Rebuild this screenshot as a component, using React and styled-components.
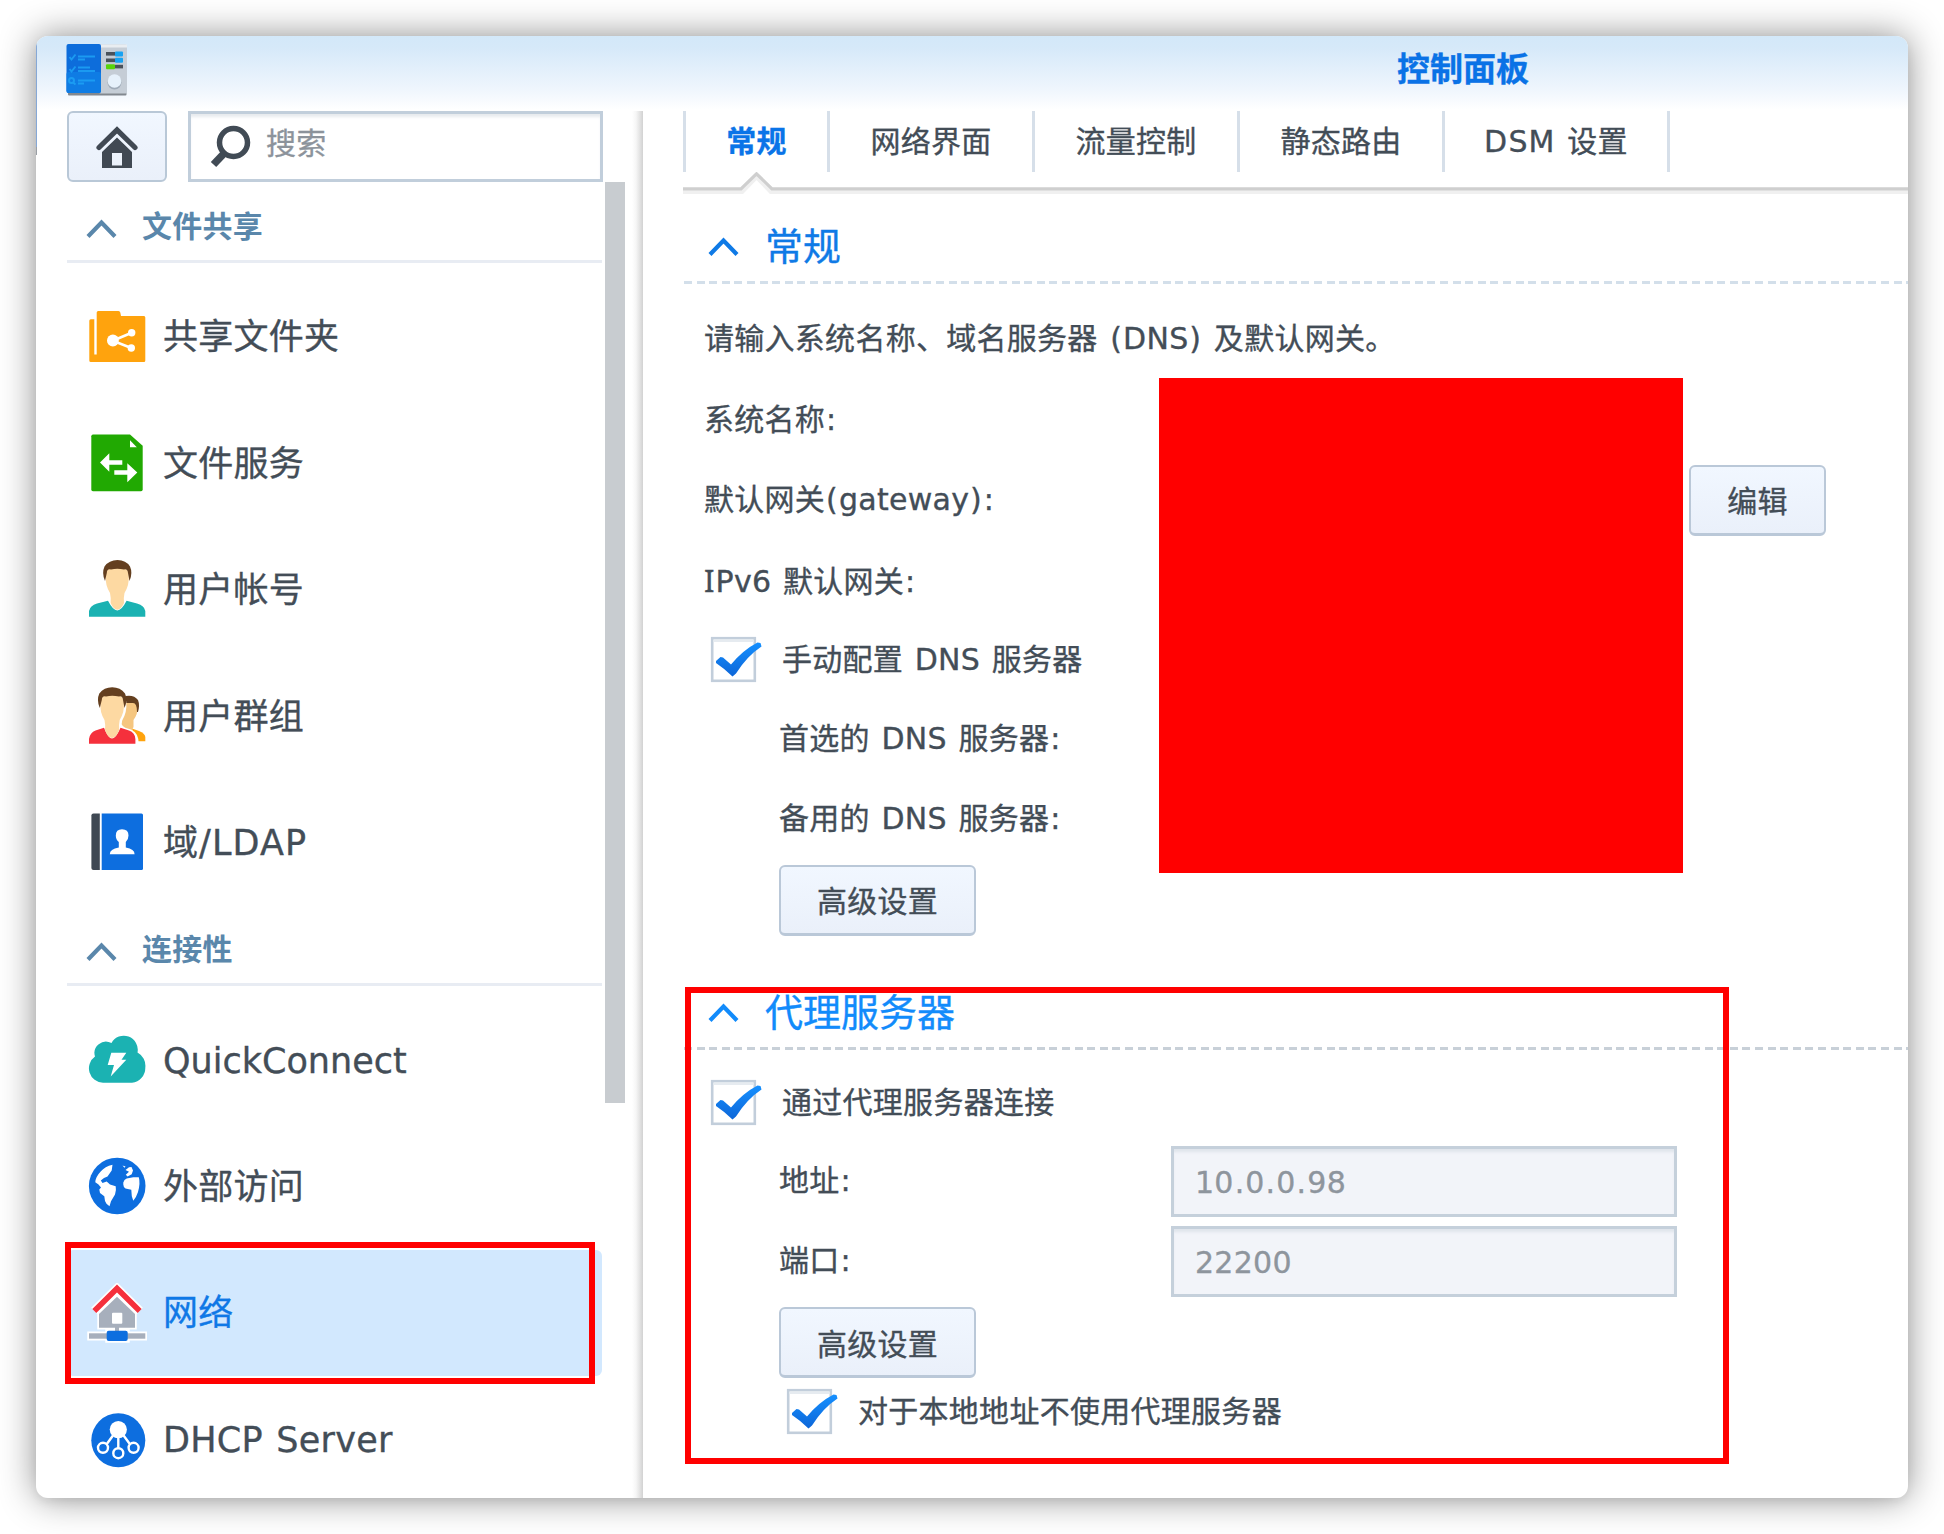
import React from "react";
import styled, { createGlobalStyle } from "styled-components";

const GlobalStyle = createGlobalStyle`
  *, *::before, *::after { box-sizing: border-box; }
  html, body { margin: 0; padding: 0; background: #fff; }
  body {
    width: 1944px;
    height: 1534px;
    overflow: hidden;
    font-family: "DejaVu Sans", "Noto Sans CJK SC", sans-serif;
    font-size: 30px;
    letter-spacing: 0.28px;
    word-spacing: 1.8px;
    color: #434d57;
    -webkit-text-stroke: 0.35px currentColor;
  }
  button, input { font: inherit; color: inherit; letter-spacing: inherit; }
`;

const Desktop = styled.div`
  width: 1944px;
  height: 1534px;
  padding: 36px;
  background: #fff;
`;

const Window = styled.div`
  position: relative;
  display: flex;
  flex-direction: column;
  width: 1872px;
  height: 1462px;
  border-radius: 12px;
  background: #fff;
  box-shadow: 0 0 36px rgba(0, 0, 0, 0.45), 0 4px 10px rgba(0, 0, 0, 0.05);
  overflow: hidden;
`;

const TitleBar = styled.header`
  display: flex;
  flex: none;
  height: 75px;
  padding: 0 379px 0 30px;
  justify-content: space-between;
  background: linear-gradient(#d3e8f9 0, #d6e9f9 12px, #eef5fd 52px, #fff 74px);
`;

const AppIcon = styled.svg`
  width: 62px;
  height: 56px;
  margin-top: 6px;
`;

const Title = styled.h1`
  margin: 0;
  font-size: 33px;
  line-height: 68px;
  font-weight: 700;
  letter-spacing: 0;
  color: #0a72e6;
`;

const Body = styled.div`
  display: flex;
  flex: 1;
  min-height: 0;
`;

const Sidebar = styled.aside`
  display: flex;
  flex-direction: column;
  flex: none;
  width: 607px;
  padding-left: 31px;
  background: linear-gradient(90deg, transparent 596px, #f6f6f6 600px, #e2e2e2 604px, #d2d2d2 607px);
`;

const SearchRow = styled.div`
  display: flex;
  gap: 21px;
  height: 71px;
`;

const HomeButton = styled.button`
  display: flex;
  align-items: center;
  justify-content: center;
  width: 100px;
  height: 71px;
  padding: 0;
  border: 2px solid #b9c8d7;
  border-radius: 6px;
  background: linear-gradient(#f1f7ff, #eaf0fa);
`;

const SearchBox = styled.label`
  display: flex;
  align-items: center;
  width: 415px;
  height: 71px;
  padding-left: 18px;
  border: 3px solid #c1cedb;
  background: #fff;
  box-shadow: inset 0 4px 3px -1px rgba(120, 140, 160, 0.18);
  color: #8c939b;
  gap: 15px;
`;

const Placeholder = styled.span`
  line-height: 44px;
  padding-bottom: 5px;
`;

const SideScroll = styled.div`
  display: flex;
  flex: 1;
  min-height: 0;
`;

const SideList = styled.nav`
  width: 535px;
`;

const Scrollbar = styled.div`
  width: 20px;
  height: 921px;
  margin-left: 3px;
  background: #c8ccd0;
`;

const GroupHeader = styled.div`
  display: flex;
  align-items: center;
  gap: 25px;
  height: 81px;
  margin-bottom: 10.4px;
  padding: 15px 0 0 19px;
  border-bottom: 3px solid #e8ecf3;
  font-size: 30px;
  font-weight: 700;
  line-height: 44px;
  color: #5a87ab;
  -webkit-text-stroke: 0;
`;

const GroupTitle = styled.span`
  padding-bottom: 3px;
`;

const NavItem = styled.a`
  display: flex;
  align-items: center;
  gap: 16px;
  height: 126.4px;
  padding-left: 20px;
  border-radius: 6px;
  font-size: 35px;
  line-height: 50px;
  letter-spacing: ${(p) => p.$spacing}px;
  color: ${(p) => (p.$active ? "#0f78e6" : "#434d57")};
  background: ${(p) => (p.$active ? "#d2e8fe" : "transparent")};
`;

const NavIcon = styled.svg`
  flex: none;
  width: 60px;
  height: 60px;
`;

const NavText = styled.span`
  padding-top: 1.5px;
`;

const Main = styled.main`
  display: flex;
  flex-direction: column;
  flex: 1;
  padding-left: 40px;
`;

const Tabs = styled.div`
  display: flex;
  height: 61px;
  border-left: 3px solid #d6dfe9;
`;

const Tab = styled.div`
  width: ${(p) => p.$w}px;
  border-right: 3px solid #d6dfe9;
  line-height: 62px;
  text-align: center;
  font-weight: ${(p) => (p.$active ? 700 : 400)};
  color: ${(p) => (p.$active ? "#0a74e8" : "#434d57")};
`;

const Caps = styled.span`
  letter-spacing: 1.2px;
`;

const TabLine = styled.svg`
  display: block;
  width: 1225px;
  height: 26px;
`;

const SectionHeader = styled.div`
  display: flex;
  align-items: center;
  height: ${(p) => p.$h}px;
  padding: ${(p) => p.$top}px 0 0 25px;
  gap: 26px;
  font-size: 38px;
  line-height: 56px;
  letter-spacing: 0;
  color: ${(p) => p.$color};
`;

const DashLine = styled.div`
  height: 3px;
  margin-left: 1px;
  background: repeating-linear-gradient(90deg, ${(p) => p.$color} 0 8px, transparent 8px 12.6px);
`;

const Row = styled.div`
  display: flex;
  align-items: center;
  height: ${(p) => p.$h}px;
  padding-left: ${(p) => p.$indent}px;
  line-height: 44px;
  white-space: pre;
`;

const Label = styled.span`
  width: ${(p) => (p.$w ? p.$w + "px" : "auto")};
`;

const SerifCap = styled.span`
  font-family: "Noto Sans", sans-serif;
  font-size: 31px;
  letter-spacing: 1px;
`;

const Mark = styled.span`
  padding: 0 0.9px;
`;

const CheckSvg = styled.svg`
  flex: none;
  width: 54px;
  height: 48px;
  margin-right: 18px;
`;

const Button = styled.button`
  width: ${(p) => p.$w}px;
  height: 71px;
  padding: 5px 0 0;
  border: 2px solid #bac8d8;
  border-bottom-width: 3px;
  border-radius: 6px;
  background: linear-gradient(#f1f7ff, #eaf0fa);
  text-align: center;
`;

const Field = styled.div`
  width: 506px;
  height: 71px;
  padding-left: 21px;
  border: 3px solid #c5d0db;
  background: #f2f4f9;
  box-shadow: inset 0 4px 3px -1px rgba(120, 140, 160, 0.15);
  color: #8e959d;
  line-height: 68px;
`;

const Redaction = styled.div`
  position: absolute;
  left: 1123px;
  top: 342px;
  width: 524px;
  height: 495px;
  background: #ff0000;
`;

const Highlight = styled.div`
  position: absolute;
  left: ${(p) => p.$x}px;
  top: ${(p) => p.$y}px;
  width: ${(p) => p.$w}px;
  height: ${(p) => p.$h}px;
  border: 6px solid #ff0000;
`;

const EdgeSliver = styled.div`
  position: absolute;
  left: 0;
  top: 7px;
  width: 1px;
  height: 112px;
  background: linear-gradient(#86a8d6 0 93%, #9a9fa5 93%);
`;

/* Gives punctuation a little more room than the font's own advance. */
const Text = ({ children }) =>
  children.split(/([():.])/).map((part, i) => (i % 2 ? <Mark key={i}>{part}</Mark> : part));

const Chevron = ({ color }) => (
  <svg width="31" height="20" viewBox="0 0 31 20" fill="none">
    <path d="M2 17.5 15.5 3.5 29 17.5" stroke={color} strokeWidth="4.2" />
  </svg>
);

const Check = ({ id }) => (
  <CheckSvg viewBox="0 0 54 48">
    <defs>
      <linearGradient id={id} x1="0" y1="0" x2="0" y2="1">
        <stop offset="0" stopColor="#1590ff" />
        <stop offset="1" stopColor="#0d66d8" />
      </linearGradient>
    </defs>
    <rect x="2.2" y="2.2" width="42.6" height="42.6" fill="#fff" stroke="#c2cedb" strokeWidth="2.6" />
    <rect x="3.5" y="3.5" width="40" height="2.5" fill="#e6ebf0" />
    <path d="M6 25 10.500 21 13 21.500 21 28.500Q33 14 47.500 6.500L50.500 7 51.500 10.500Q37 20 26 37.500L22.500 40.500Q15 33 6 27Z" fill={`url(#${id})`} />
  </CheckSvg>
);

const PanelIcon = () => (
  <AppIcon viewBox="0 0 62 56">
    <rect x="2" y="50" width="58.500" height="3.500" rx="1" fill="#82888f" />
    <rect x="33" y="2.500" width="28" height="49" rx="1.500" fill="#c5cdd6" />
    <rect x="33" y="2.500" width="28" height="3" fill="#e9edf1" />
    <rect x="0.500" y="2" width="34.500" height="49" rx="2" fill="#0d6ddb" />
    <rect x="0.500" y="30" width="34.500" height="21" rx="2" fill="#0f7ce4" />
    <g stroke="#1ea2f5" strokeWidth="2" fill="none" opacity="0.85">
      <path d="M3.500 15l2 2.500 4-5M12 14.500h17M12 17.500h7" />
      <path d="M3.500 27l2 2.500 4-5M12 25.500h12M12 29h17" />
      <circle cx="5.500" cy="38.500" r="2.500" />
      <path d="M7 40.500l2.500 2M12 38.500h17M12 41.500h6" />
    </g>
    <rect x="40" y="10" width="9" height="3.600" fill="#4a525b" />
    <rect x="49" y="9.500" width="8" height="5" rx="1" fill="#17a2f2" />
    <rect x="40" y="16.500" width="9" height="3.600" fill="#4a525b" />
    <rect x="49" y="15.800" width="8" height="5" rx="1" fill="#17a2f2" />
    <rect x="49" y="22.800" width="8" height="3.600" fill="#4a525b" />
    <rect x="40" y="22.200" width="9" height="5" rx="1" fill="#58d40b" />
    <circle cx="48.500" cy="40.500" r="7" fill="#9fabb8" />
    <circle cx="48.500" cy="39" r="6.800" fill="#e6f1fb" />
  </AppIcon>
);

const HomeGlyph = () => (
  <svg width="42" height="42" viewBox="0 0 42 42">
    <path d="M3 21.500 21 3.800 39 21.500" fill="none" stroke="#414953" strokeWidth="5.200" strokeLinecap="round" strokeLinejoin="miter" />
    <path d="M21 11.500 36 26V42H26V27H16V42H6V26Z" fill="#414953" />
    <path d="M16 39.500h10V42H16Z" fill="#414953" />
  </svg>
);

const SearchGlyph = () => (
  <svg width="42" height="44" viewBox="0 0 42 44" fill="none">
    <circle cx="24.500" cy="17.500" r="14" stroke="#414b55" strokeWidth="5.500" />
    <path d="M14.500 29 4.500 39.500" stroke="#414b55" strokeWidth="7.500" />
  </svg>
);

const FolderIcon = () => (
  <NavIcon viewBox="0 0 60 60">
    <path d="M3.800 12.300H7.300V47.500H9.700V5.500Q9.700 4 11.200 4H31.500Q33 4 33.300 5.500L34 9H57Q58.300 9 58.300 10.500V53.500Q58.300 55 57 55H3.800Q2.300 55 2.300 53.500V13.800Q2.300 12.300 3.800 12.300Z" fill="#ffa30d" />
    <path d="M44.700 25.700 25.700 33.700 44.300 41" fill="none" stroke="#fff" strokeWidth="2.600" />
    <circle cx="25.900" cy="33.500" r="5.900" fill="#fff" />
    <circle cx="44.700" cy="25.700" r="3.700" fill="#fff" />
    <circle cx="44.300" cy="41" r="3.700" fill="#fff" />
  </NavIcon>
);

const FileIcon = () => (
  <NavIcon viewBox="0 0 60 60">
    <path d="M6 1.500H43L55.700 12.800V56.500Q55.700 58.200 54 58.200H6Q4.300 58.200 4.300 56.500V3.200Q4.300 1.500 6 1.500Z" fill="#21a902" />
    <path d="M43 7.300V14.300H49.800Z" fill="#fff" />
    <path d="M13 29.500 22.300 20.200V27.200H35.300V31.800H22.300V38.800Z M50.300 39.500 40.300 30.200V37.200H27.300V41.800H40.300V49.200Z" fill="#fff" />
  </NavIcon>
);

const UserIcon = () => (
  <NavIcon viewBox="0 0 60 60">
    <path d="M2 57.700V52Q3 46.500 10 44.500L21 41.800Q26 51.500 30.300 51.500T39.600 41.800L50 44.500Q57.500 46.500 58.300 52V57.700Z" fill="#1bb2b2" />
    <path d="M18.700 16Q18.700 8 30.300 8T41.700 16Q42.500 26 37.500 34Q36.500 38 37 44Q34 50.700 30.300 50.700T23.600 44Q24 38 23 34Q18 26 18.700 16Z" fill="#fdd9a2" />
    <path d="M18 22Q14.500 14 17.500 7.500Q22 1 30.500 1T43 7.500Q46 14 42.500 22L41 14Q40.500 9.500 37 10.500Q30 9 24 10.500Q20 9.500 19.800 14Z" fill="#643f1f" />
  </NavIcon>
);

const GroupIcon = () => (
  <NavIcon viewBox="0 0 60 60">
    <path d="M45 42.600 52 45Q58 47.500 58.300 51V55.300H48Z" fill="#ffa30d" />
    <path d="M38 12Q50 11 50.800 20Q51 28 46.500 34V41Q45 45 42 46L34 38Z" fill="#f5c680" />
    <path d="M38.500 10Q47 8.500 51 14Q53 19 51 26H50Q50 17 46 17H38.500Z" fill="#643f1f" />
    <path d="M13.500 16Q13.500 7 25 7T37.500 16Q38.500 26 33.500 34Q32.500 38 33 42L44 45.500Q50 48 50 58H43L25 54 18 44Q18.500 38 17.500 34Q12.500 26 13.500 16Z" fill="#fff" stroke="#fff" strokeWidth="3.500" />
    <path d="M2 57.700V53Q3 46.500 8.500 44.500L17 41.800Q21 52.500 25 52.500T33.500 41.800L42 44.500Q48 46.500 48.400 53V57.700Z" fill="#f5303c" />
    <path d="M13.500 16Q13.500 8 25 8T36.900 16Q37.700 26 32.700 34Q31.700 38 32.200 44Q29 52 25 52T18 44Q18.500 38 17.500 34Q12.500 26 13.500 16Z" fill="#fdd9a2" />
    <path d="M12.800 22Q9.300 14 12.300 7.500Q17 1.300 25.200 1.300T38 7.500Q41 14 37.500 22L36 14Q35.500 9.500 32 10.500Q25 9 19 10.500Q15 9.500 14.800 14Z" fill="#643f1f" />
  </NavIcon>
);

const LdapIcon = () => (
  <NavIcon viewBox="0 0 60 60">
    <path d="M6.500 1.500H12.800V57.900H6.500Q4.400 57.900 4.400 56V3.500Q4.400 1.500 6.500 1.500Z" fill="#3f4853" />
    <path d="M14.700 1.500H54.500Q56 1.500 56 3V56.400Q56 57.900 54.500 57.900H14.700Z" fill="#0d6edf" />
    <path d="M35 17.200Q41.500 17.200 41.500 23.500Q41.500 27.500 38.800 30V35.500Q47.600 37 47.600 42.200H22.800Q22.800 37 31.800 35.500V30Q28.800 27.500 28.800 23.500Q28.800 17.200 35 17.200Z" fill="#fff" />
  </NavIcon>
);

const CloudIcon = () => (
  <NavIcon viewBox="0 0 60 60">
    <path d="M16 52.800A14.500 14.500 0 0 1 8 26.500A11.500 11.500 0 0 1 24.500 13A14 14 0 0 1 50.500 22.500A15 15 0 0 1 58.300 37.500A15 15 0 0 1 45 52.800Z" fill="#1bb2b2" />
    <path d="M24.300 22.700H39.300L34.500 29.800H39.300L23.700 46.500 27 35H20.700Z" fill="#fff" />
  </NavIcon>
);

const GlobeIcon = () => (
  <NavIcon viewBox="0 0 60 60">
    <circle cx="30.200" cy="30" r="28.300" fill="#0d6edf" />
    <g fill="#fff">
      <path d="M25.500 8.800Q18 10.500 13.700 15.500Q8.500 21 8.300 26.200L11.500 28.500 14 31.500 12.300 33.500 13 37 17.300 40.200Q17.500 45 19.500 47.800L22.500 50.200 24 45.200 28 38.500Q29.500 34 28.700 30.200L23 28.500 19.700 25.500 15.500 27 13.800 24.500 17 22 20.500 20.500 24.700 14.500Z" />
      <path d="M36.300 26.500Q37 23.500 39.700 22.500L46.300 21.300H51.800Q53.500 27 51 36Q49 42 46.300 44.800L44.800 40.200 44.300 33.800 38.500 32.500Q36.300 31 36.300 28.500Z" />
      <path d="M38.500 14 42 11.300 44.500 11 46 14.500 44.700 18.300 40.500 20.500 38.800 18.800 42 15.800ZM35.500 9.500l3 1-1 1.300Z" />
    </g>
  </NavIcon>
);

const NetworkIcon = () => (
  <NavIcon viewBox="0 0 60 60">
    <g stroke="#fff" strokeWidth="3.500" fill="#fff">
      <path d="M12 31 30 13.700 48 31V44.700H12Z" />
      <path d="M2 50.300H58.300V55.700H2Z M20 47.700H41V58H20Z" />
    </g>
    <path d="M7.300 28 30 5.500 52.700 28" fill="none" stroke="#fff" strokeWidth="9" />
    <path d="M7.300 28 30 5.500 52.700 28" fill="none" stroke="#f5303c" strokeWidth="5.600" />
    <path d="M12 31 30 13.700 48 31V44.700H12Z" fill="#a7afbc" />
    <rect x="28" y="44" width="4" height="5" fill="#a7afbc" />
    <rect x="25" y="29.700" width="10.300" height="11" rx="1" fill="#fff" />
    <rect x="2" y="50.300" width="56.300" height="5.400" fill="#a7afbc" />
    <rect x="19.700" y="47.700" width="21" height="10.300" rx="2" fill="#0d6edf" />
  </NavIcon>
);

const DhcpIcon = () => (
  <NavIcon viewBox="0 0 60 60">
    <circle cx="31.300" cy="31.300" r="27" fill="#0d6edf" />
    <circle cx="31.300" cy="20.600" r="8.600" fill="#fff" />
    <g fill="none" stroke="#fff" strokeWidth="2.400">
      <circle cx="16" cy="38.800" r="5" />
      <circle cx="31.300" cy="44.200" r="5" />
      <circle cx="46.600" cy="38.800" r="5" />
      <path d="M26 26.500 19.800 35M31.300 28V39.200M36.600 26.500 42.800 35" />
    </g>
  </NavIcon>
);

const groups = [
  {
    title: "文件共享",
    items: [
      ["共享文件夹", FolderIcon, 0.25],
      ["文件服务", FileIcon, 0.25],
      ["用户帐号", UserIcon, 0.25],
      ["用户群组", GroupIcon, 0.25],
      ["域/LDAP", LdapIcon, 1.1],
    ],
  },
  {
    title: "连接性",
    items: [
      ["QuickConnect", CloudIcon, 0],
      ["外部访问", GlobeIcon, 0.25],
      ["网络", NetworkIcon, 0.25],
      ["DHCP Server", DhcpIcon, 0.3],
    ],
  },
];

const tabs = [
  ["常规", 144],
  ["网络界面", 205],
  ["流量控制", 205],
  ["静态路由", 205],
  [<React.Fragment key="dsm"><Caps>DSM</Caps> 设置</React.Fragment>, 225],
];

export default function App() {
  return (
    <>
      <GlobalStyle />
      <Desktop>
        <Window>
          <TitleBar>
            <PanelIcon />
            <Title>控制面板</Title>
          </TitleBar>
          <Body>
            <Sidebar>
              <SearchRow>
                <HomeButton>
                  <HomeGlyph />
                </HomeButton>
                <SearchBox>
                  <SearchGlyph />
                  <Placeholder>搜索</Placeholder>
                </SearchBox>
              </SearchRow>
              <SideScroll>
                <SideList>
                  {groups.map((g) => (
                    <React.Fragment key={g.title}>
                      <GroupHeader>
                        <Chevron color="#5a87ab" />
                        <GroupTitle>{g.title}</GroupTitle>
                      </GroupHeader>
                      {g.items.map(([name, Icon, spacing]) => (
                        <NavItem key={name} $active={name === "网络"} $spacing={spacing}>
                          <Icon />
                          <NavText>{name}</NavText>
                        </NavItem>
                      ))}
                    </React.Fragment>
                  ))}
                </SideList>
                <Scrollbar />
              </SideScroll>
            </Sidebar>
            <Main>
              <Tabs>
                {tabs.map(([name, w], i) => (
                  <Tab key={i} $w={w} $active={i === 0}>
                    {name}
                  </Tab>
                ))}
              </Tabs>
              <TabLine viewBox="0 0 1225 26" fill="none">
                <path d="M0 19.500H59L73.500 4.500 88 19.500H1225" stroke="#f0f0f0" strokeWidth="5" />
                <path d="M0 16.800H58L73.500 1.800 89 16.800H1225" stroke="#cfcfcf" strokeWidth="3.200" />
              </TabLine>
              <SectionHeader $h={83} $top={14} $color="#0f7ae6">
                <Chevron color="#0f7ae6" />
                常规
              </SectionHeader>
              <DashLine $color="#d3dfea" />
              <Row $h={109} $indent={21}>
                <Label>
                  <Text>请输入系统名称、域名服务器 (DNS) 及默认网关。</Text>
                </Label>
              </Row>
              <Row $h={53} $indent={21}>
                <Label>
                  <Text>系统名称:</Text>
                </Label>
              </Row>
              <Row $h={108} $indent={21}>
                <Label $w={985}>
                  <Text>默认网关(gateway):</Text>
                </Label>
                <Button $w={137}>编辑</Button>
              </Row>
              <Row $h={54} $indent={21}>
                <Label>
                  <SerifCap>I</SerifCap>
                  <Text>Pv6 默认网关:</Text>
                </Label>
              </Row>
              <Row $h={104} $indent={27}>
                <Check id="checkDns" />
                手动配置 DNS 服务器
              </Row>
              <Row $h={53} $indent={96}>
                <Label>
                  <Text>首选的 DNS 服务器:</Text>
                </Label>
              </Row>
              <Row $h={108} $indent={96}>
                <Label>
                  <Text>备用的 DNS 服务器:</Text>
                </Label>
              </Row>
              <Row $h={54} $indent={96}>
                <Button $w={197}>高级设置</Button>
              </Row>
              <SectionHeader $h={120} $top={52} $color="#128bfb">
                <Chevron color="#128bfb" />
                代理服务器
              </SectionHeader>
              <DashLine $color="#c8d0d8" />
              <Row $h={105} $indent={27}>
                <Check id="checkProxy" />
                通过代理服务器连接
              </Row>
              <Row $h={52} $indent={96}>
                <Label $w={392}>
                  <Text>地址:</Text>
                </Label>
                <Field>
                  <Text>10.0.0.98</Text>
                </Field>
              </Row>
              <Row $h={108} $indent={96}>
                <Label $w={392}>
                  <Text>端口:</Text>
                </Label>
                <Field>22200</Field>
              </Row>
              <Row $h={55} $indent={96}>
                <Button $w={197}>高级设置</Button>
              </Row>
              <Row $h={84} $indent={103}>
                <Check id="checkLocal" />
                对于本地地址不使用代理服务器
              </Row>
            </Main>
          </Body>
          <EdgeSliver />
          <Redaction />
          <Highlight $x={29} $y={1206} $w={530} $h={142} />
          <Highlight $x={649} $y={951} $w={1044} $h={477} />
        </Window>
      </Desktop>
    </>
  );
}
